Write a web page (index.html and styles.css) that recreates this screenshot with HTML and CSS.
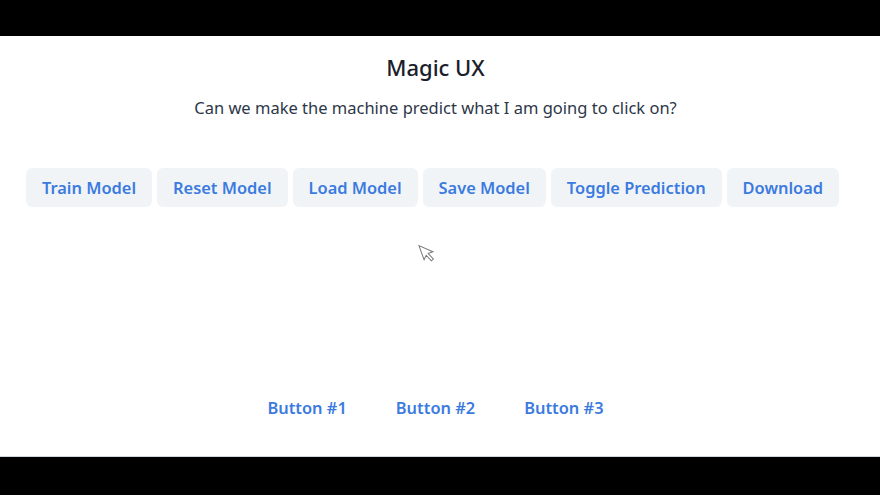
FILE: index.html
```html
<!DOCTYPE html>
<html>
<head>
<meta charset="utf-8">
<link rel="stylesheet" href="styles.css">
</head>
<body>
<div class="stage">
  <h1 class="title">Magic UX</h1>
  <p class="subtitle">Can we make the machine predict what I am going to click on?</p>
  <div class="toolbar">
    <button class="btn">Train Model</button>
    <button class="btn">Reset Model</button>
    <button class="btn">Load Model</button>
    <button class="btn">Save Model</button>
    <button class="btn">Toggle Prediction</button>
    <button class="btn">Download</button>
  </div>
  <div class="canvas">
    <svg class="cursor" width="14" height="22" viewBox="0 0 14 22">
      <path d="M1 1 L1 16 L4.5 12.5 L7.5 19.5 L10 18.5 L7 11.5 L12 11.5 Z" fill="#fff" stroke="#555" stroke-width="1"/>
    </svg>
  </div>
  <div class="choices">
    <button class="ghost">Button #1</button>
    <button class="ghost">Button #2</button>
    <button class="ghost">Button #3</button>
  </div>
</div>
</body>
</html>
```
FILE: styles.css
```css
html, body {
  margin: 0;
  padding: 0;
  background: #000;
}
body {
  padding: 36px 0 37px;
  font-family: "Noto Sans", "Open Sans", sans-serif;
}
.stage {
  background: #fff;
  height: 421px;
  display: flex;
  flex-direction: column;
  align-items: center;
  border-bottom: 1px solid #cfd6dd;
  box-sizing: border-box;
  padding-right: 9px;
}
.title {
  margin: 16px 0 0;
  font-size: 22px;
  line-height: 30px;
  font-weight: 500;
  color: #1a202c;
}
.subtitle {
  margin: 14px 0 0;
  font-size: 16.5px;
  line-height: 24px;
  color: #2d3748;
}
.toolbar {
  display: flex;
  gap: 5px;
  margin-top: 48px;
  margin-right: 6px;
}
.btn {
  font-family: inherit;
  font-size: 16.4px;
  font-weight: 600;
  color: #3b7be0;
  background: #f1f4f7;
  border: none;
  border-radius: 6px;
  height: 39px;
  padding: 0 16px;
}
.canvas {
  position: relative;
  width: 100%;
  height: 181px;
}
.cursor {
  position: absolute;
  left: 421px;
  top: 35px;
  transform: rotate(-20deg);
  opacity: 0.8;
}
.choices {
  display: flex;
  gap: 17px;
}
.ghost {
  font-family: inherit;
  font-size: 16.4px;
  font-weight: 600;
  color: #3b7be0;
  background: transparent;
  border: none;
  height: 39px;
  padding: 0 16px;
}
```
